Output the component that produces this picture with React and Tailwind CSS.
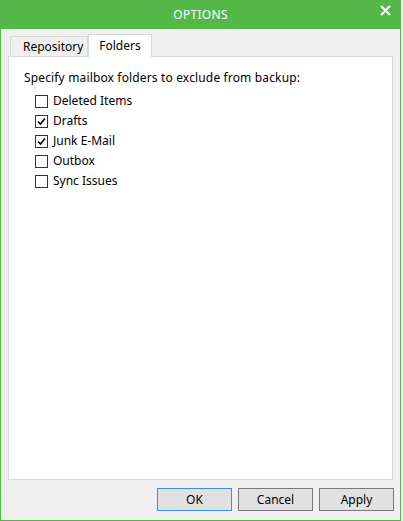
import React, { useState } from "react";

const folders = [
  { name: "Deleted Items", checked: false },
  { name: "Drafts", checked: true },
  { name: "Junk E-Mail", checked: true },
  { name: "Outbox", checked: false },
  { name: "Sync Issues", checked: false },
];

function Check({ checked }) {
  return (
    <span className="w-[13px] h-[13px] border border-[#333333] bg-white flex items-center justify-center">
      {checked && (
        <svg width="9" height="9" viewBox="0 0 9 9">
          <path d="M1 4.5 L3.5 7 L8 1.5" stroke="#000" strokeWidth="1.6" fill="none" />
        </svg>
      )}
    </span>
  );
}

export default function App() {
  const [items, setItems] = useState(folders);

  const toggle = (i) => {
    setItems((prev) => prev.map((f, idx) => (idx === i ? { ...f, checked: !f.checked } : f)));
  };

  return (
    <div className="w-[403px] h-[521px] bg-white font-['Segoe_UI','Noto_Sans',sans-serif] text-[12px] text-black">
      <div className="w-[401px] h-[521px] border border-[#53b848] bg-[#f0f0f0] flex flex-col">
        {/* title bar */}
        <div className="h-[28px] bg-[#53b848] flex items-center justify-center relative">
          <span className="text-white text-[12px] tracking-[0.3px]">OPTIONS</span>
          <svg
            className="absolute right-[9px] top-[4px]"
            width="11"
            height="11"
            viewBox="0 0 11 11"
          >
            <path d="M1 1 L10 10 M10 1 L1 10" stroke="#fff" strokeWidth="2.2" />
          </svg>
        </div>

        {/* tabs */}
        <div className="flex items-end pl-[9px] h-[27px]">
          <div className="w-[78px] h-[20px] pl-[12px] border border-b-0 border-[#d9d9d9] bg-[#f0f0f0] flex items-center">
            Repository
          </div>
          <div className="w-[64px] h-[23px] border border-b-0 border-[#d9d9d9] bg-white flex items-center justify-center -mb-px relative">
            Folders
          </div>
        </div>

        {/* panel */}
        <div className="mx-[7px] h-[424px] border border-[#d9d9d9] bg-white pt-[13px] pl-[15px]">
          <div className="leading-[16px] tracking-[0.15px]">Specify mailbox folders to exclude from backup:</div>
          <div className="flex flex-col mt-[5px] pl-[11px]">
            {items.map((f, i) => (
              <label
                key={f.name}
                className="flex items-center h-[20px] gap-[5px] cursor-default"
                onClick={() => toggle(i)}
              >
                <Check checked={f.checked} />
                <span>{f.name}</span>
              </label>
            ))}
          </div>
        </div>

        {/* buttons */}
        <div className="flex justify-end gap-[6px] pr-[6px] pt-[8px]">
          <button className="w-[75px] h-[23px] bg-[#e1e1e1] border border-[#3c8fe6]">OK</button>
          <button className="w-[75px] h-[23px] bg-[#e1e1e1] border border-[#7a7a7a]">Cancel</button>
          <button className="w-[75px] h-[23px] bg-[#e1e1e1] border border-[#7a7a7a]">Apply</button>
        </div>
      </div>
    </div>
  );
}
